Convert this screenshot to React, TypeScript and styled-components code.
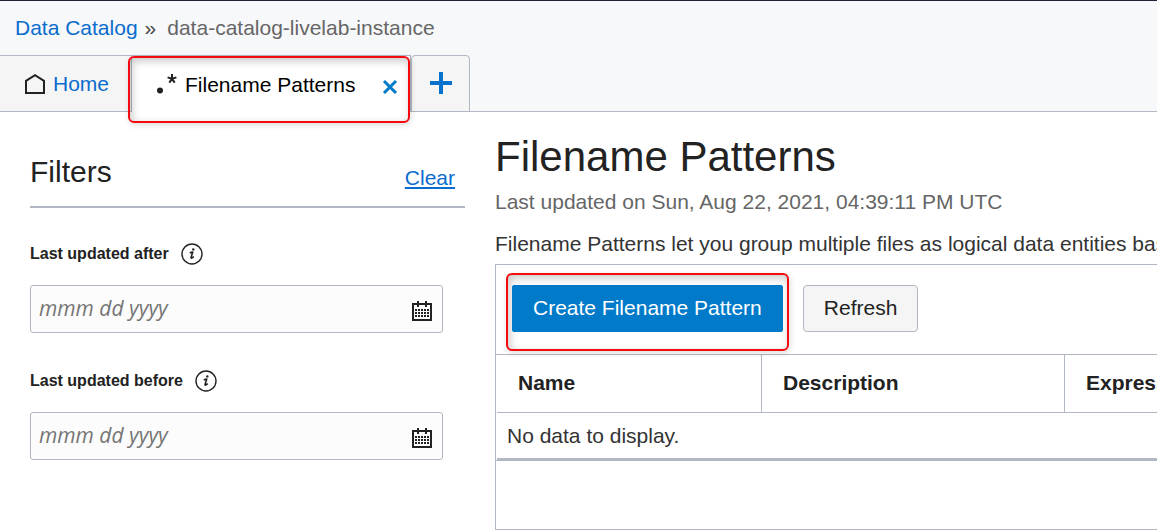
import React from "react";
import styled, { createGlobalStyle, css } from "styled-components";

const color = {
  ink: "#222222",
  muted: "#666666",
  link: "#0a6cce",
  primary: "#007ac9",
  line: "#b1b8c3",
  header: "#f7f8fa",
  soft: "#f5f5f5",
  mark: "#f50a0f",
};

const GlobalStyle = createGlobalStyle`
  * { box-sizing: border-box; }
  body {
    margin: 0;
    background: #ffffff;
    color: ${color.ink};
    font: 21px/24px "Liberation Sans", Arial, sans-serif;
    overflow-x: hidden;
  }
  button, input { font: inherit; color: inherit; margin: 0; }
  button { cursor: pointer; }
  svg { display: block; flex: none; }
`;

const TopBar = styled.header`
  border-top: 1px solid #1e2036;
  background: ${color.header};
`;

const Breadcrumb = styled.nav`
  display: flex;
  padding: 15px 15px;
`;

const CrumbLink = styled.a`
  color: ${color.link};
  text-decoration: none;
`;

const Separator = styled.span`
  margin: 0 11px 0 7px;
  color: #444444;
`;

const CurrentCrumb = styled.span`
  color: ${color.muted};
`;

const TabBar = styled.nav`
  display: flex;
  height: 57px;
  background: linear-gradient(${color.line}, ${color.line}) bottom / 100% 1px no-repeat;
`;

const HomeTab = styled.a`
  display: flex;
  align-items: center;
  gap: 8px;
  padding: 0 22px 0 25px;
  border: solid ${color.line};
  border-width: 1px 1px 1px 0;
  background: ${color.soft};
  color: ${color.link};
  text-decoration: none;
`;

/* Red outline that calls attention to the control it surrounds. */
const marked = css`
  position: relative;
  isolation: isolate;
  &::before {
    content: "";
    position: absolute;
    z-index: -1;
    border: 2px solid ${color.mark};
    border-radius: 6px;
    box-shadow: 1px 2px 6px rgba(0, 0, 0, 0.14), inset 2px 3px 8px rgba(0, 0, 0, 0.22);
    pointer-events: none;
  }
`;

const ActiveTab = styled.div`
  ${marked}
  display: flex;
  align-items: center;
  border-top: 1px solid ${color.line};
  border-right: 1px solid ${color.line};
  background: #ffffff;
  color: #000000;
  padding: 2px 12px 0 24px;
  &::before {
    inset: 0 0 -11px -4px;
  }
`;

const TabTitle = styled.span`
  margin: 0 27px 0 7px;
`;

const IconButton = styled.button`
  display: flex;
  padding: 0;
  border: 0;
  background: none;
`;

const CloseButton = styled(IconButton)`
  padding-top: 4px;
`;

const AddTab = styled.button`
  display: flex;
  align-items: center;
  justify-content: center;
  width: 59px;
  padding: 0 0 2px;
  border: 1px solid ${color.line};
  border-radius: 4px 4px 0 0;
  background: ${color.soft};
`;

const Body = styled.div`
  display: grid;
  grid-template-columns: 435px minmax(0, 1fr);
  gap: 30px;
  padding-left: 30px;
`;

const Sidebar = styled.aside`
  padding-top: 43px;
`;

const FilterHeader = styled.div`
  display: flex;
  align-items: flex-start;
  justify-content: space-between;
  padding: 0 10px 16px 0;
  border-bottom: 2px solid ${color.line};
  margin-bottom: 34px;
`;

const FilterTitle = styled.h2`
  margin: 0;
  font-size: 30px;
  line-height: 34px;
  font-weight: 400;
`;

const ClearLink = styled.a`
  padding-top: 11px;
  color: ${color.link};
  text-decoration: underline 2px;
  text-underline-offset: 2px;
`;

const Field = styled.div`
  margin: 0 22px 36px 0;
`;

const LabelRow = styled.div`
  display: flex;
  align-items: center;
  gap: 12px;
  margin-bottom: 19px;
`;

const Label = styled.label`
  font-size: 16px;
  font-weight: 700;
`;

const DateBox = styled.div`
  display: flex;
  align-items: center;
  height: 48px;
  padding: 0 10px 0 8px;
  border: 1px solid ${color.line};
  border-radius: 3px;
  background: #fcfcfc;
`;

const DateInput = styled.input`
  flex: 1;
  min-width: 0;
  padding: 0;
  border: 0;
  outline: 0;
  background: none;
  &::placeholder {
    color: #757575;
    opacity: 1;
    font-family: "Open Sans", "Noto Sans", sans-serif;
    font-size: 21px;
    font-style: italic;
  }
`;

const CalendarButton = styled(IconButton)`
  padding-top: 4px;
`;

const Main = styled.main`
  padding-top: 21px;
  overflow: hidden;
`;

const Title = styled.h1`
  margin: 0 0 9px;
  font-size: 42px;
  line-height: 48px;
  font-weight: 400;
`;

const Updated = styled.p`
  margin: 0 0 18px;
  color: ${color.muted};
`;

const Description = styled.p`
  margin: 0 0 8px;
  color: #333333;
  white-space: nowrap;
`;

const Panel = styled.section`
  min-width: 900px;
  border: 1px solid ${color.line};
  padding-bottom: 68px;
`;

const Toolbar = styled.div`
  display: flex;
  gap: 20px;
  padding: 20px 16px 22px;
  border-bottom: 1px solid ${color.line};
`;

const MarkedAction = styled.div`
  ${marked}
  &::before {
    inset: -12px -6px -19px;
  }
`;

const Button = styled.button<{ $primary?: boolean }>`
  height: 47px;
  padding: 0 20px 2px;
  border: 1px solid ${(p) => (p.$primary ? color.primary : color.line)};
  border-radius: ${(p) => (p.$primary ? 2 : 4)}px;
  background: ${(p) => (p.$primary ? color.primary : color.soft)};
  color: ${(p) => (p.$primary ? "#ffffff" : color.ink)};
`;

const TableFrame = styled.div`
  padding-left: 1px;
  border-bottom: 1px solid ${color.line};
`;

const Table = styled.table`
  width: 100%;
  table-layout: fixed;
  border-spacing: 0;
  border-bottom: 2px solid ${color.line};
`;

const HeadCell = styled.th<{ $width?: number }>`
  width: ${(p) => (p.$width ? `${p.$width}px` : "auto")};
  height: 58px;
  padding: 0 21px 1px;
  border-bottom: 1px solid ${color.line};
  text-align: left;
  & + & {
    border-left: 1px solid ${color.line};
  }
`;

const EmptyCell = styled.td`
  height: 45px;
  padding: 0 10px;
  color: #333333;
`;

const HomeIcon = () => (
  <svg width="20" height="20" viewBox="0 0 20 20" fill="none" stroke={color.ink} strokeWidth="2" aria-hidden="true">
    <path d="M1 19V6.8L10 1.2L19 6.8V19Z" />
  </svg>
);

const PatternIcon = () => (
  <svg width="22" height="24" viewBox="0 0 22 24" aria-hidden="true">
    <circle cx="4" cy="17.5" r="3" fill={color.ink} />
    <path
      d="M16 5.8V1M16 5.8L11.6 4.4M16 5.8L20.4 4.4M16 5.8L13.3 9.6M16 5.8L18.7 9.6"
      stroke={color.ink}
      strokeWidth="2"
    />
  </svg>
);

const CloseIcon = () => (
  <svg width="16" height="16" viewBox="0 0 16 16" stroke={color.primary} strokeWidth="3" aria-hidden="true">
    <path d="M2 2L14 14M14 2L2 14" />
  </svg>
);

const PlusIcon = () => (
  <svg width="22" height="22" viewBox="0 0 22 22" fill="#0572ce" aria-hidden="true">
    <path d="M9 0h4v9h9v4h-9v9H9v-9H0V9h9Z" />
  </svg>
);

const InfoIcon = () => (
  <svg width="22" height="22" viewBox="0 0 22 22" fill="none" stroke={color.ink} aria-hidden="true">
    <circle cx="11" cy="11" r="10" strokeWidth="1.4" />
    <circle cx="12.3" cy="6.4" r="1.2" fill={color.ink} stroke="none" />
    <path d="M8.8 10.2Q10.6 9 11.7 9.2L10 14.6Q10 15.9 12.8 13.7" strokeWidth="1.6" />
  </svg>
);

const CalendarIcon = () => (
  <svg width="20" height="20" viewBox="0 0 20 20" fill={color.ink} aria-hidden="true">
    <path d="M0 2H5V0H7V2H13V0H15V2H20V20H0ZM2 4V18H18V4H15V6H13V4H7V6H5V4Z" fillRule="evenodd" />
    {[8, 11, 14].map((y) =>
      [3, 6, 9, 12, 15].map((x) => <rect key={`${x}-${y}`} x={x} y={y} width="2" height="2" />)
    )}
  </svg>
);

function DateField({ id, label }: { id: string; label: string }) {
  return (
    <Field>
      <LabelRow>
        <Label htmlFor={id}>{label}</Label>
        <IconButton type="button" aria-label={`About ${label}`}>
          <InfoIcon />
        </IconButton>
      </LabelRow>
      <DateBox>
        <DateInput id={id} type="text" placeholder="mmm dd yyyy" />
        <CalendarButton type="button" aria-label="Select date">
          <CalendarIcon />
        </CalendarButton>
      </DateBox>
    </Field>
  );
}

export default function App() {
  return (
    <>
      <GlobalStyle />
      <TopBar>
        <Breadcrumb aria-label="Breadcrumb">
          <CrumbLink href="#catalog">Data Catalog</CrumbLink>
          <Separator>»</Separator>
          <CurrentCrumb>data-catalog-livelab-instance</CurrentCrumb>
        </Breadcrumb>
        <TabBar aria-label="Open tabs">
          <HomeTab href="#home">
            <HomeIcon />
            Home
          </HomeTab>
          <ActiveTab>
            <PatternIcon />
            <TabTitle>Filename Patterns</TabTitle>
            <CloseButton type="button" aria-label="Close tab">
              <CloseIcon />
            </CloseButton>
          </ActiveTab>
          <AddTab type="button" aria-label="Add tab">
            <PlusIcon />
          </AddTab>
        </TabBar>
      </TopBar>
      <Body>
        <Sidebar>
          <FilterHeader>
            <FilterTitle>Filters</FilterTitle>
            <ClearLink href="#clear">Clear</ClearLink>
          </FilterHeader>
          <DateField id="updated-after" label="Last updated after" />
          <DateField id="updated-before" label="Last updated before" />
        </Sidebar>
        <Main>
          <Title>Filename Patterns</Title>
          <Updated>Last updated on Sun, Aug 22, 2021, 04:39:11 PM UTC</Updated>
          <Description>Filename Patterns let you group multiple files as logical data entities based</Description>
          <Panel>
            <Toolbar>
              <MarkedAction>
                <Button type="button" $primary>
                  Create Filename Pattern
                </Button>
              </MarkedAction>
              <Button type="button">Refresh</Button>
            </Toolbar>
            <TableFrame>
              <Table>
                <thead>
                  <tr>
                    <HeadCell $width={264}>Name</HeadCell>
                    <HeadCell $width={303}>Description</HeadCell>
                    <HeadCell>Expression</HeadCell>
                  </tr>
                </thead>
                <tbody>
                  <tr>
                    <EmptyCell colSpan={3}>No data to display.</EmptyCell>
                  </tr>
                </tbody>
              </Table>
            </TableFrame>
          </Panel>
        </Main>
      </Body>
    </>
  );
}
